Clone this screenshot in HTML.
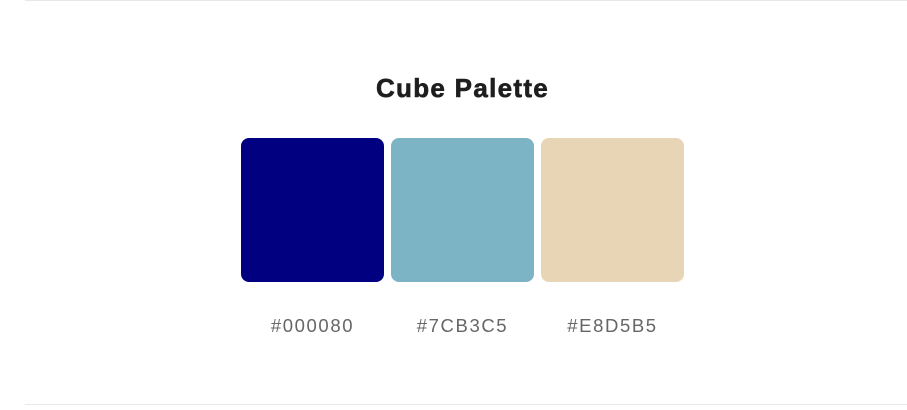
<!DOCTYPE html>
<html><head><style>
body{margin:0;width:907px;height:410px;background:#fff;position:relative;overflow:hidden;font-family:"Liberation Sans",sans-serif}
.line{position:absolute;left:25px;right:0;height:1px;background:#e8e8ea}
.t{position:absolute;top:73px;left:0;width:925px;text-align:center;font-weight:900;font-size:26px;color:#1e1e1e;letter-spacing:1.3px;-webkit-text-stroke:0.6px #1e1e1e}
.s{position:absolute;top:138px;width:143px;height:144px;border-radius:8px}
.l{position:absolute;top:315px;width:143px;text-align:center;font-size:18.5px;color:#666;letter-spacing:1.6px}
</style></head><body>
<div class="line" style="top:0"></div>
<div class="line" style="top:404px"></div>
<div class="t">Cube Palette</div>
<div class="s" style="left:241px;background:#000080"></div>
<div class="s" style="left:391px;background:#7CB3C5"></div>
<div class="s" style="left:541px;background:#E8D5B5"></div>
<div class="l" style="left:241px">#000080</div>
<div class="l" style="left:391px">#7CB3C5</div>
<div class="l" style="left:541px">#E8D5B5</div>
</body></html>
